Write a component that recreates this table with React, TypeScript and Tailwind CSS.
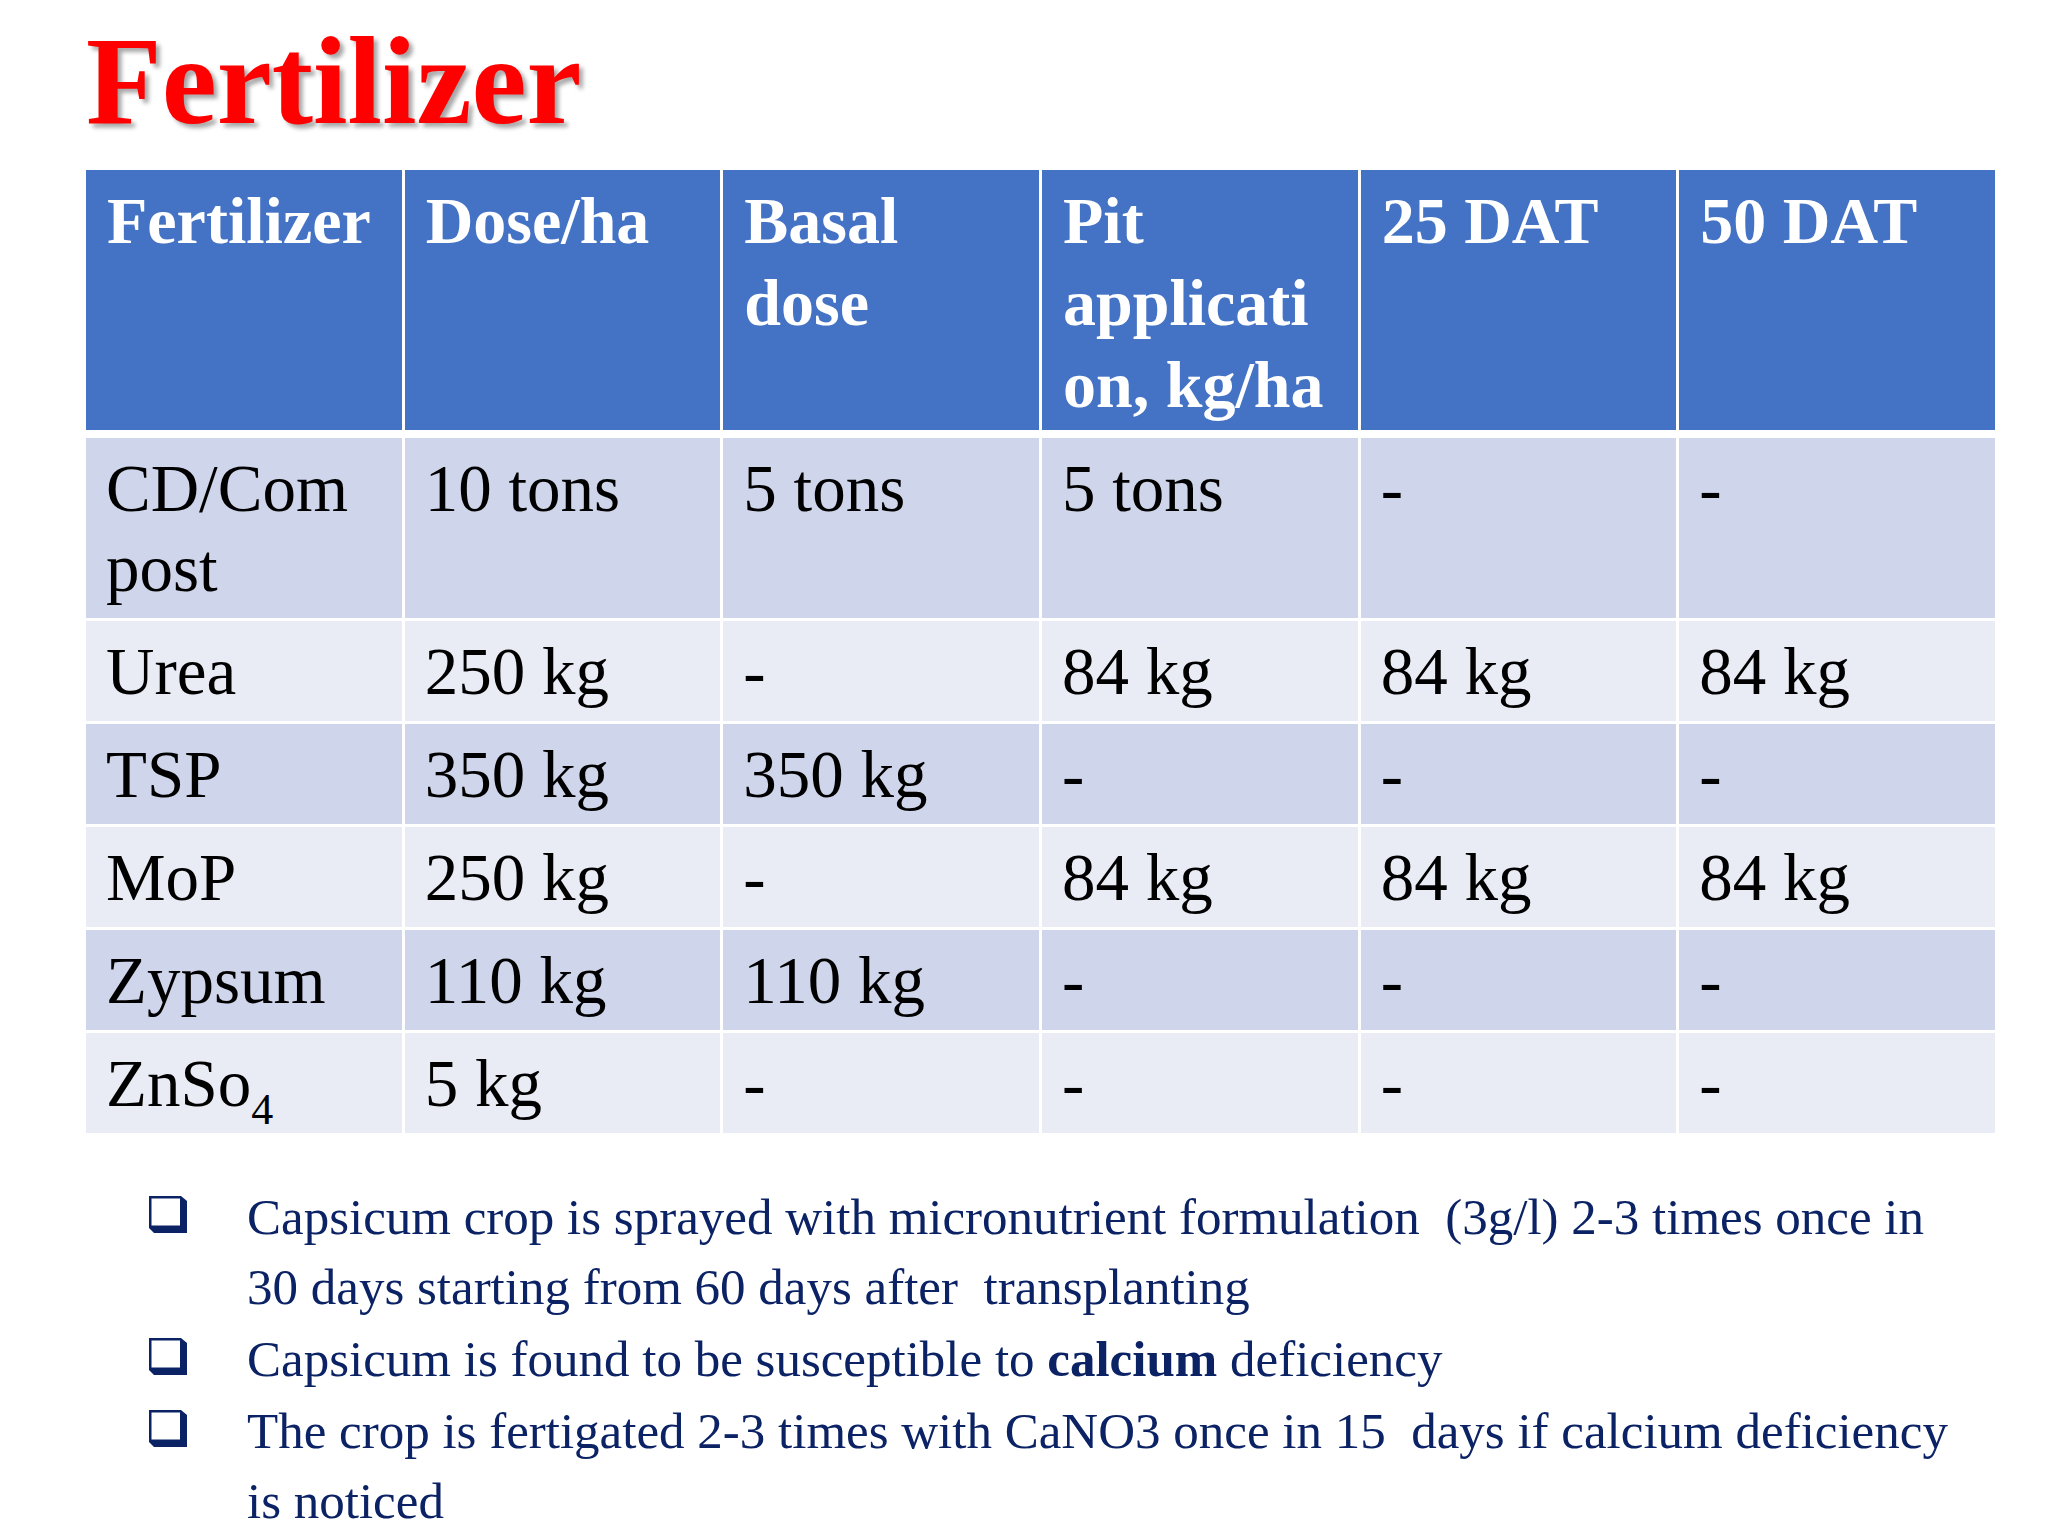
import React from 'react';

type Cell = React.ReactNode;

const headers: string[][] = [
  ['Fertilizer'],
  ['Dose/ha'],
  ['Basal', 'dose'],
  ['Pit', 'applicati', 'on, kg/ha'],
  ['25 DAT'],
  ['50 DAT'],
];

const rows: Cell[][] = [
  [
    <>
      CD/Com
      <br />
      post
    </>,
    '10 tons',
    '5 tons',
    '5 tons',
    '-',
    '-',
  ],
  ['Urea', '250 kg', '-', '84 kg', '84 kg', '84 kg'],
  ['TSP', '350 kg', '350 kg', '-', '-', '-'],
  ['MoP', '250 kg', '-', '84 kg', '84 kg', '84 kg'],
  ['Zypsum', '110 kg', '110 kg', '-', '-', '-'],
  [
    <>
      ZnSo
      <span className="relative top-[18px] text-[44px] leading-none">4</span>
    </>,
    '5 kg',
    '-',
    '-',
    '-',
    '-',
  ],
];

function BulletBox() {
  return (
    <svg width="38" height="38" viewBox="0 0 38 38" className="mt-[14px] shrink-0">
      <polygon points="0,0 32,0 38,5 38,37 5,37 0,32" fill="#0b2265" />
      <rect x="2.5" y="2.5" width="28.5" height="27" fill="#ffffff" />
    </svg>
  );
}

function Bullet({ children }: { children: React.ReactNode }) {
  return (
    <div className="flex">
      <BulletBox />
      <div className="ml-[60px] whitespace-pre text-[51px] leading-[70px] text-[#0b2265]">
        {children}
      </div>
    </div>
  );
}

export default function App() {
  return (
    <div className="w-[2048px] h-[1536px] overflow-hidden bg-white font-['Liberation_Serif','Times_New_Roman',serif]">
      <div className="pl-[86px] pr-[53px] pt-[20px]">
        {/* Title */}
        <h1 className="text-[124px] leading-[124px] font-bold text-[#ff0000] [text-shadow:4px_4px_4px_rgba(0,0,0,0.35)]">
          Fertilizer
        </h1>

        {/* Table */}
        <div className="mt-[26px] w-[1909px] flex flex-col gap-y-[3px]">
          <div className="grid grid-cols-6 gap-x-[3px] mb-[5px]">
            {headers.map((lines, i) => (
              <div
                key={i}
                className="bg-[#4472c4] pl-[21px] pt-[10px] pb-[4px] text-[66px] leading-[82px] font-bold text-white whitespace-nowrap"
              >
                {lines.map((l, j) => (
                  <div key={j}>{l}</div>
                ))}
              </div>
            ))}
          </div>

          {rows.map((row, r) => (
            <div key={r} className="grid grid-cols-6 gap-x-[3px]">
              {row.map((cell, c) => (
                <div
                  key={c}
                  className={`${r % 2 === 0 ? 'bg-[#cfd5ea]' : 'bg-[#e9ebf5]'} pl-[20px] pt-[10px] pb-[10px] text-[67px] leading-[80px] text-black whitespace-nowrap`}
                >
                  {cell}
                </div>
              ))}
            </div>
          ))}
        </div>
      </div>

      {/* Notes */}
      <div className="mt-[49px] pl-[149px] flex flex-col gap-y-[2px]">
        <Bullet>
          {'Capsicum crop is sprayed with micronutrient formulation  (3g/l) 2-3 times once in'}
          <br />
          {'30 days starting from 60 days after  transplanting'}
        </Bullet>
        <Bullet>
          {'Capsicum is found to be susceptible to '}
          <span className="font-bold">calcium</span>
          {' deficiency'}
        </Bullet>
        <Bullet>
          {'The crop is fertigated 2-3 times with CaNO3 once in 15  days if calcium deficiency'}
          <br />
          {'is noticed'}
        </Bullet>
      </div>
    </div>
  );
}
